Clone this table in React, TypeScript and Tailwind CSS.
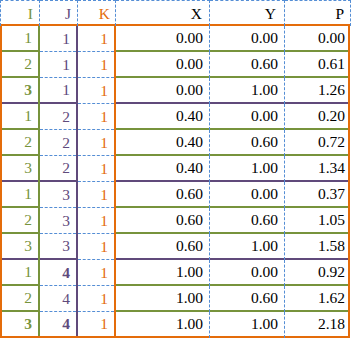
import React from "react";

// colours taken from the spreadsheet look
const rows = [
  { i: 1, j: 1, k: 1, x: "0.00", y: "0.00", p: "0.00" },
  { i: 2, j: 1, k: 1, x: "0.00", y: "0.60", p: "0.61" },
  { i: 3, j: 1, k: 1, x: "0.00", y: "1.00", p: "1.26", boldI: true },
  { i: 1, j: 2, k: 1, x: "0.40", y: "0.00", p: "0.20" },
  { i: 2, j: 2, k: 1, x: "0.40", y: "0.60", p: "0.72" },
  { i: 3, j: 2, k: 1, x: "0.40", y: "1.00", p: "1.34" },
  { i: 1, j: 3, k: 1, x: "0.60", y: "0.00", p: "0.37" },
  { i: 2, j: 3, k: 1, x: "0.60", y: "0.60", p: "1.05" },
  { i: 3, j: 3, k: 1, x: "0.60", y: "1.00", p: "1.58" },
  { i: 1, j: 4, k: 1, x: "1.00", y: "0.00", p: "0.92", boldJ: true },
  { i: 2, j: 4, k: 1, x: "1.00", y: "0.60", p: "1.62" },
  { i: 3, j: 4, k: 1, x: "1.00", y: "1.00", p: "2.18", boldI: true, boldJ: true },
];

const cell = "flex items-center justify-end shrink-0 relative";
const head = "h-[26px] flex items-center justify-end shrink-0 border-t border-r border-dashed border-[#558ed5]";

const VDash = () => (
  <span className="absolute right-0 top-0 bottom-[-2px] border-r border-dashed border-[#558ed5]" />
);

const App = () => {
  return (
    <div className="w-[352px] h-[338px] bg-white font-['Liberation_Serif',serif] text-[15.5px] leading-none">
      {/* header */}
      <div className="flex">
        <div className={`${head} w-[40px] pr-[6px] border-l text-[#77933c]`}>I</div>
        <div className={`${head} w-[38px] pr-[6px] text-[#604a7b]`}>J</div>
        <div className={`${head} w-[38px] pr-[5px] text-[#e46c0a]`}>K</div>
        <div className={`${head} w-[94px] pr-[7px] text-black`}>X</div>
        <div className={`${head} w-[75px] pr-[8px] text-black`}>Y</div>
        <div className={`${head} w-[66px] pr-[6px] text-black`}>P</div>
      </div>
      <div className="h-[2px] w-[351px] bg-[#e46c0a] -mt-[2px]" />

      {/* body */}
      {rows.map((r, idx) => {
        const last = idx === rows.length - 1;
        const groupEnd = idx % 3 === 2;
        const h = last ? "h-[24px]" : "h-[26px]";
        const solidB = last
          ? ""
          : groupEnd
          ? "border-b-2 border-[#604a7b]"
          : "border-b-2 border-[#77933c]";
        const dashB = last ? "" : "border-b border-dashed border-[#558ed5]";
        const jB = groupEnd ? solidB : dashB;

        return (
          <div key={idx} className="flex">
            <div className="w-[2px] bg-[#e46c0a]" />
            <div
              className={`${cell} ${h} w-[36px] pr-[6px] ${solidB} text-[#77933c] ${r.boldI ? "font-bold" : ""}`}
            >
              {r.i}
            </div>
            <div className="w-[2px] bg-[#77933c]" />
            <div
              className={`${cell} ${h} w-[36px] pr-[6px] ${jB} text-[#604a7b] ${r.boldJ ? "font-bold" : ""}`}
            >
              {r.j}
            </div>
            <div className="w-[2px] bg-[#604a7b]" />
            <div className={`${cell} ${h} w-[36px] pr-[6px] ${dashB} text-[#e46c0a]`}>
              {r.k}
            </div>
            <div className="w-[2px] bg-[#e46c0a]" />
            <div className={`${cell} ${h} w-[94px] pr-[7px] ${solidB}`}>
              {r.x}
              <VDash />
            </div>
            <div className={`${cell} ${h} w-[75px] pr-[7px] ${solidB}`}>
              {r.y}
              <VDash />
            </div>
            <div className={`${cell} ${h} w-[63px] pr-[3px] ${solidB}`}>
              {r.p}
            </div>
            <div className="w-[2px] bg-[#e46c0a]" />
          </div>
        );
      })}
      <div className="h-[2px] w-[350px] bg-[#e46c0a]" />
    </div>
  );
};

export default App;
